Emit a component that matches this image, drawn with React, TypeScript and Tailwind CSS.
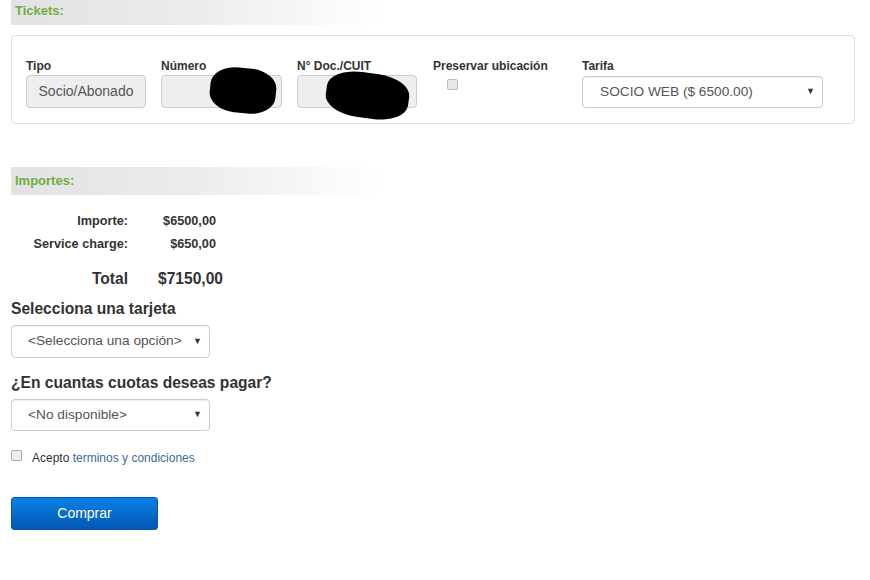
import React from "react";

function SectionHeader({ title }: { title: string }) {
  return (
    <div className="w-[370px] h-[28px] flex items-center pl-[4px] bg-gradient-to-r from-[#e2e2e2] via-[#ececec] to-white">
      <span className="text-[13px] font-bold text-[#6fae3f]">{title}</span>
    </div>
  );
}

function FakeSelect({ value, className }: { value: string; className: string }) {
  return (
    <div
      className={`flex items-center justify-between border border-[#cccccc] rounded-[4px] bg-white text-[13.7px] text-[#555555] shadow-[inset_0_1px_1px_rgba(0,0,0,0.075)] ${className}`}
    >
      <span>{value}</span>
      <span className="text-[9px] text-[#333333] mr-[7px]">▼</span>
    </div>
  );
}

// black marker scribbles covering personal data
function Redaction({ className }: { className: string }) {
  return <div className={`absolute bg-black rounded-[40%] ${className}`} />;
}

export default function App() {
  return (
    <div
      className="w-[870px] h-[580px] bg-white text-[#333333] px-[11px] relative"
      style={{ fontFamily: '"Liberation Sans", Arial, sans-serif' }}
    >
      <div className="-mt-[3px]">
        <SectionHeader title="Tickets:" />
      </div>

      {/* Tickets panel */}
      <div className="mt-[10px] w-[844px] h-[89px] border border-[#dddddd] rounded-[4px] pl-[14px] pt-[23px] flex gap-[15px] relative">
        <div className="flex flex-col">
          <label className="text-[12px] font-bold leading-[14px] h-[16px]">Tipo</label>
          <div className="w-[120px] h-[33px] flex items-center justify-center bg-[#eeeeee] border border-[#cccccc] rounded-[4px] text-[14px] text-[#555555]">
            Socio/Abonado
          </div>
        </div>
        <div className="flex flex-col">
          <label className="text-[12px] font-bold leading-[14px] h-[16px]">Número</label>
          <div className="w-[121px] h-[33px] bg-[#eeeeee] border border-[#cccccc] rounded-[4px]" />
        </div>
        <div className="flex flex-col">
          <label className="text-[12px] font-bold leading-[14px] h-[16px]">N° Doc./CUIT</label>
          <div className="w-[120px] h-[33px] bg-[#eeeeee] border border-[#cccccc] rounded-[4px]" />
        </div>
        <div className="flex flex-col ml-[1px] w-[134px]">
          <label className="text-[12px] font-bold leading-[14px] h-[16px]">Preservar ubicación</label>
          <div className="mt-[4px] ml-[14px] w-[11px] h-[11px] rounded-[2px] border border-[#bbbbbb] bg-[#e8e8e8]" />
        </div>
        <div className="flex flex-col">
          <label className="text-[12px] font-bold leading-[14px] h-[16px]">Tarifa</label>
          <FakeSelect value="SOCIO WEB ($ 6500.00)" className="mt-[1px] w-[241px] h-[32px] pl-[17px]" />
        </div>
        <Redaction className="left-[198px] top-[32px] w-[66px] h-[45px] rotate-[6deg]" />
        <Redaction className="left-[314px] top-[37px] w-[83px] h-[45px] rotate-[8deg]" />
      </div>

      <div className="mt-[43px]">
        <SectionHeader title="Importes:" />
      </div>

      {/* Amounts */}
      <div className="mt-[19px] grid grid-cols-[117px_88px] gap-y-[9px] text-[12.7px] font-bold leading-[14px]">
        <span className="text-right">Importe:</span>
        <span className="text-right">$6500,00</span>
        <span className="text-right">Service charge:</span>
        <span className="text-right">$650,00</span>
      </div>
      <div className="mt-[19px] flex text-[15.6px] font-bold leading-[18px]">
        <span className="w-[117px] text-right">Total</span>
        <span className="ml-[30px]">$7150,00</span>
      </div>

      <h3 className="mt-[12px] text-[15.6px] font-bold leading-[18px]">Selecciona una tarjeta</h3>
      <FakeSelect value="<Selecciona una opción>" className="mt-[7px] w-[199px] h-[33px] pl-[16px]" />

      <h3 className="mt-[16px] text-[15.6px] font-bold leading-[18px]">¿En cuantas cuotas deseas pagar?</h3>
      <FakeSelect value="<No disponible>" className="mt-[7px] w-[199px] h-[32px] pl-[16px]" />

      <div className="mt-[13px] flex items-center">
        <div className="w-[11px] h-[11px] rounded-[2px] border border-[#aaaaaa] bg-[#eeeeee]" />
        <span className="ml-[10px] mt-[5px] text-[12px]">
          Acepto <span className="text-[#3f6a94]">terminos y condiciones</span>
        </span>
      </div>

      <button className="mt-[30px] w-[147px] h-[33px] rounded-[3px] bg-gradient-to-b from-[#0b80e4] to-[#0359b6] text-white text-[14px] border border-[#0558ad]">
        Comprar
      </button>
    </div>
  );
}
